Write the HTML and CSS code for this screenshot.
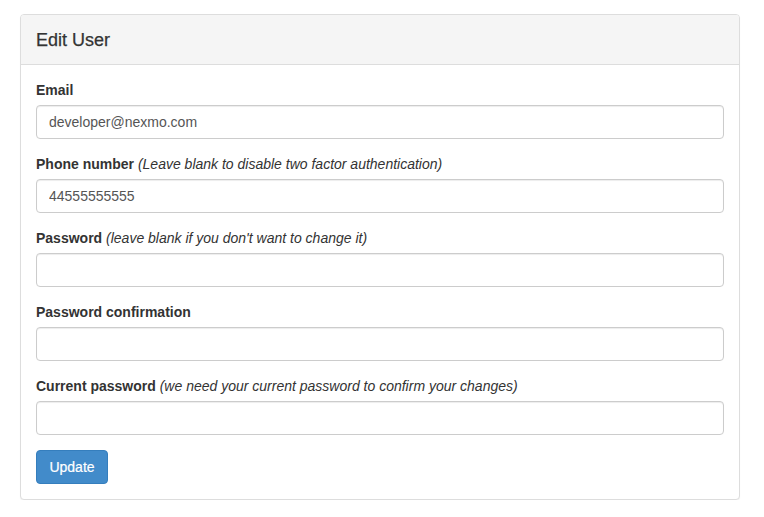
FILE: index.html
```html
<!DOCTYPE html>
<html>
<head>
<meta charset="utf-8">
<link rel="stylesheet" href="styles.css">
</head>
<body>
<div class="page">
  <div class="panel">
    <div class="panel-heading"><h3 class="panel-title">Edit User</h3></div>
    <form class="panel-body">
      <div class="form-group">
        <label class="label">Email</label>
        <input class="input" type="text" value="developer@nexmo.com">
      </div>
      <div class="form-group">
        <label class="label">Phone number <em class="hint">(Leave blank to disable two factor authentication)</em></label>
        <input class="input" type="text" value="44555555555">
      </div>
      <div class="form-group">
        <label class="label">Password <em class="hint">(leave blank if you don't want to change it)</em></label>
        <input class="input" type="password">
      </div>
      <div class="form-group">
        <label class="label">Password confirmation</label>
        <input class="input" type="password">
      </div>
      <div class="form-group">
        <label class="label">Current password <em class="hint">(we need your current password to confirm your changes)</em></label>
        <input class="input" type="password">
      </div>
      <button class="btn" type="button">Update</button>
    </form>
  </div>
</div>
</body>
</html>
```
FILE: styles.css
```css
* { box-sizing: border-box; }
html, body { margin: 0; padding: 0; background: #fff; }
body {
  font-family: "Liberation Sans", Arial, sans-serif;
  font-size: 14px;
  line-height: 20px;
  color: #333;
}
.page { padding: 14px 24px 0 20px; }
.panel {
  width: 720px;
  border: 1px solid #ddd;
  border-radius: 4px;
  background: #fff;
  box-shadow: 0 1px 1px rgba(0,0,0,.05);
}
.panel-heading {
  background: #f5f5f5;
  border-bottom: 1px solid #ddd;
  border-radius: 3px 3px 0 0;
  padding: 15px 15px 14px;
}
.panel-title {
  margin: 0;
  font-size: 18px;
  line-height: 20px;
  font-weight: 500;
  color: #333;
  -webkit-text-stroke: 0.25px #333;
}
.panel-body { display: block; padding: 15px; margin: 0; }
.form-group { display: flex; flex-direction: column; margin-bottom: 15px; }
.label { display: block; font-weight: bold; margin-bottom: 5px; }
.hint { font-weight: normal; font-style: italic; }
.input {
  display: block;
  width: 100%;
  height: 34px;
  padding: 6px 12px;
  font-family: inherit;
  font-size: 14px;
  line-height: 20px;
  color: #555;
  background: #fff;
  border: 1px solid #ccc;
  border-radius: 4px;
  box-shadow: inset 0 1px 1px rgba(0,0,0,.075);
  outline: none;
}
.btn {
  display: inline-block;
  height: 34px;
  min-width: 72px;
  padding: 6px 12px;
  font-family: inherit;
  font-size: 14px;
  line-height: 20px;
  color: #fff;
  background: #428bca;
  border: 1px solid #357ebd;
  border-radius: 4px;
  cursor: pointer;
  -webkit-text-stroke: 0.2px #fff;
}
```
